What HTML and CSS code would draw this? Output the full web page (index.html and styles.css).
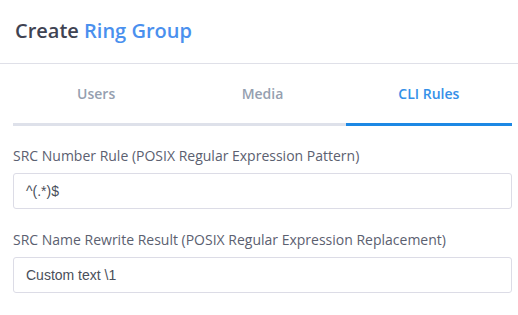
FILE: index.html
```html
<!DOCTYPE html>
<html>
<head>
<meta charset="utf-8">
<link rel="stylesheet" href="styles.css">
</head>
<body>
<div class="header">
  <h1 class="title">Create <span class="accent">Ring Group</span></h1>
</div>
<div class="content">
  <div class="tabs">
    <div class="tab">Users</div>
    <div class="tab">Media</div>
    <div class="tab active">CLI Rules</div>
  </div>
  <div class="field">
    <label class="label">SRC Number Rule (POSIX Regular Expression Pattern)</label>
    <div class="input">^(.*)$</div>
  </div>
  <div class="field">
    <label class="label">SRC Name Rewrite Result (POSIX Regular Expression Replacement)</label>
    <div class="input">Custom text \1</div>
  </div>
</div>
</body>
</html>
```
FILE: styles.css
```css
html, body {
  margin: 0;
  padding: 0;
  background: #ffffff;
  font-family: "Open Sans", "Noto Sans", sans-serif;
}
.header {
  height: 63px;
  border-bottom: 1px solid #dfe0e8;
  box-sizing: content-box;
  display: flex;
  align-items: center;
  padding: 0 15px;
}
.title {
  margin: 0;
  font-size: 20px;
  font-weight: 600;
  color: #3f4352;
  line-height: 28px;
  padding-bottom: 2px;
}
.accent {
  color: #4a90ee;
}
.content {
  padding: 0 6px 0 13px;
}
.tabs {
  display: grid;
  grid-template-columns: 1fr 1fr 1fr;
}
.tab {
  text-align: center;
  font-size: 14px;
  font-weight: 600;
  line-height: 20px;
  padding: 20px 0 19px;
  color: #959fb0;
  border-bottom: 3px solid #dee1ea;
}
.tab.active {
  color: #3590e8;
  border-bottom-color: #1c88e4;
}
.field {
  display: flex;
  flex-direction: column;
  margin-top: 20px;
}
.field + .field {
  margin-top: 21px;
}
.label {
  font-size: 14px;
  line-height: 20px;
  color: #5b6070;
  margin-bottom: 7px;
}
.input {
  height: 34px;
  border: 1px solid #dcdce6;
  border-radius: 3px;
  padding: 0 12px;
  display: flex;
  align-items: center;
  font-family: "Liberation Sans", Arial, sans-serif;
  font-size: 14px;
  color: #4a4f5a;
}
```
